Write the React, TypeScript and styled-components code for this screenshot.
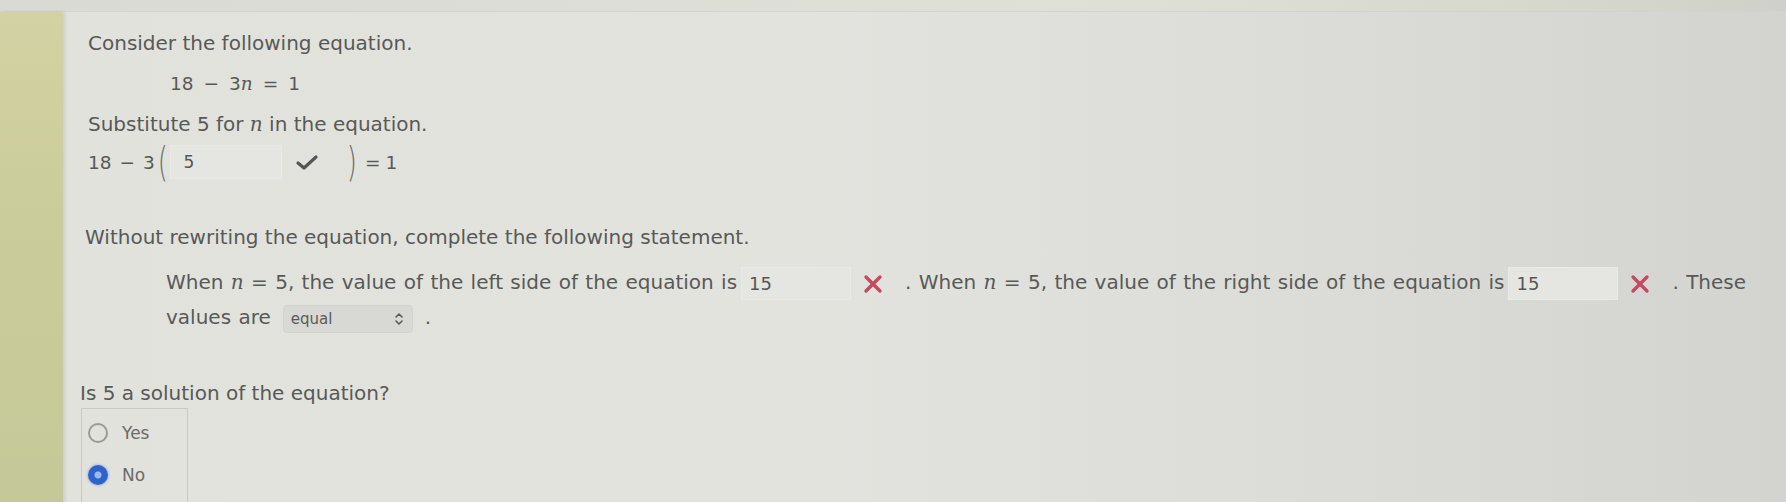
import React from "react";
import styled, { createGlobalStyle } from "styled-components";

const GlobalStyle = createGlobalStyle`
    html, body {
        margin: 0;
        padding: 0;
        background: #dedfd9;
    }
    body {
        font-family: "DejaVu Sans", Verdana, sans-serif;
        color: #585957;
        -webkit-font-smoothing: antialiased;
    }
`;

const Page = styled.div`
    width: 1786px;
    height: 502px;
    overflow: hidden;
    display: flex;
    flex-direction: column;
    background: linear-gradient(90deg, #e1e2dc 0%, #e3e3de 45%, #dbdcd8 75%, #d3d4d0 100%);
`;

const TopBand = styled.div`
    height: 11px;
    flex-shrink: 0;
    background: linear-gradient(90deg, #d9dad4 0%, #dfe0d8 60%, #d8d9cd 85%, #cfd0c9 100%);
    border-bottom: 1px solid #d2d3cc;
`;

const Body = styled.div`
    flex: 1;
    display: flex;
`;

const Strip = styled.div`
    width: 63px;
    flex-shrink: 0;
    background: linear-gradient(180deg, #d2d2a4 0%, #cbcc9b 40%, #c4c898 100%);
    box-shadow: 2px 0 3px rgba(150, 150, 130, 0.25);
`;

const Content = styled.div`
    flex: 1;
    padding: 19px 0 0 24px;
    font-size: 20px;
`;

const Para = styled.div<{ $top: number; $indent?: number }>`
    margin-top: ${(p) => p.$top}px;
    margin-left: ${(p) => p.$indent ?? 0}px;
    line-height: 24px;
    white-space: nowrap;
`;

const MathLine = styled.div<{ $top: number; $indent?: number }>`
    margin-top: ${(p) => p.$top}px;
    margin-left: ${(p) => p.$indent ?? 0}px;
    line-height: 24px;
    font-size: 18.5px;
    white-space: nowrap;
`;

const Op = styled.span<{ $gap?: number }>`
    margin: 0 ${(p) => p.$gap ?? 8}px;
`;

const Var = styled.i`
    font-family: "DejaVu Serif", "Liberation Serif", serif;
    font-style: italic;
`;

const SubRow = styled.div`
    margin-top: 6px;
    height: 40px;
    display: flex;
    align-items: center;
    font-size: 18.5px;
`;

const Paren = styled.span`
    font-size: 40px;
    font-weight: 200;
    line-height: 40px;
    color: #6a6b68;
    transform: scaleX(0.65);
    display: inline-block;
`;

const AnswerBox = styled.span<{ $w: number; $h: number; $size?: number; $pad?: number }>`
    display: inline-flex;
    align-items: center;
    box-sizing: border-box;
    width: ${(p) => p.$w}px;
    height: ${(p) => p.$h}px;
    padding-left: ${(p) => p.$pad ?? 7}px;
    border: 1px solid #e9eae5;
    background: #e5e6e1;
    color: #555654;
    font-size: ${(p) => p.$size ?? 18}px;
    vertical-align: middle;
`;

const Statement = styled.div`
    margin-top: 16px;
    margin-left: 79px;
    line-height: 34px;
    word-spacing: 1px;
    white-space: nowrap;

    ${AnswerBox} {
        margin-left: 4px;
    }
`;

const MarkSlot = styled.span<{ $gap: number }>`
    display: inline-flex;
    align-items: center;
    vertical-align: middle;
    margin: 0 ${(p) => p.$gap}px 0 12px;
`;

const SelectBox = styled.span`
    display: inline-flex;
    align-items: center;
    justify-content: space-between;
    box-sizing: border-box;
    width: 130px;
    height: 28px;
    margin: 0 12px;
    padding: 0 8px 0 7px;
    border-radius: 4px;
    background: #d8d9d4;
    border: 1px solid #d2d3ce;
    font-size: 15px;
    word-spacing: 0;
    color: #5a5b59;
    vertical-align: middle;
`;

const RadioBox = styled.div`
    margin-top: 3px;
    margin-left: -6px;
    width: 107px;
    height: 120px;
    box-sizing: border-box;
    border: 1px solid #c9cac5;
    border-bottom: none;
    padding-top: 14px;
    display: flex;
    flex-direction: column;
    gap: 22px;
`;

const RadioRow = styled.label`
    display: flex;
    align-items: center;
    gap: 14px;
    padding-left: 6px;
    height: 20px;
    font-size: 17px;
    color: #6a6b68;
`;

const RadioDot = styled.span<{ $on?: boolean }>`
    width: 20px;
    height: 20px;
    box-sizing: border-box;
    border-radius: 50%;
    border: ${(p) => (p.$on ? "none" : "2px solid #9a9b97")};
    background: ${(p) =>
        p.$on
            ? "radial-gradient(circle, #9fb8ec 0 3px, #2f63cc 4px 100%)"
            : "transparent"};
    box-shadow: ${(p) => (p.$on ? "0 0 3px rgba(47, 99, 204, 0.6)" : "none")};
`;

const Check = () => (
    <svg width="26" height="20" viewBox="0 0 26 20">
        <path
            d="M4 11 L10 16 L22 5"
            fill="none"
            stroke="#555653"
            strokeWidth="3.2"
            strokeLinecap="round"
            strokeLinejoin="round"
        />
    </svg>
);

const Cross = () => (
    <svg width="20" height="20" viewBox="0 0 20 20">
        <path
            d="M3 3 L17 17 M17 3 L3 17"
            stroke="#c44a62"
            strokeWidth="3.4"
            strokeLinecap="round"
        />
    </svg>
);

const UpDown = () => (
    <svg width="10" height="14" viewBox="0 0 10 14">
        <path
            d="M2 5 L5 2 L8 5 M2 9 L5 12 L8 9"
            fill="none"
            stroke="#5a5b58"
            strokeWidth="1.6"
            strokeLinecap="round"
            strokeLinejoin="round"
        />
    </svg>
);

const App: React.FC = () => {
    return (
        <>
            <GlobalStyle />
            <Page>
                <TopBand />
                <Body>
                    <Strip />
                    <Content>
                        <Para $top={0} $indent={1}>
                            Consider the following equation.
                        </Para>
                        <MathLine $top={17} $indent={83}>
                            18<Op $gap={10}>−</Op>3<Var>n</Var>
                            <Op $gap={10}>=</Op>1
                        </MathLine>
                        <Para $top={16} $indent={1}>
                            Substitute 5 for <Var>n</Var> in the equation.
                        </Para>
                        <SubRow>
                            <span style={{ marginLeft: 1 }}>18</span>
                            <Op>−</Op>
                            <span>3</span>
                            <Paren>(</Paren>
                            <AnswerBox $w={112} $h={34} $size={17} $pad={12}>
                                5
                            </AnswerBox>
                            <MarkSlot $gap={24}>
                                <Check />
                            </MarkSlot>
                            <Paren>)</Paren>
                            <Op $gap={5}>=</Op>
                            <span>1</span>
                        </SubRow>
                        <Para $top={43} $indent={-2}>
                            Without rewriting the equation, complete the
                            following statement.
                        </Para>
                        <Statement>
                            When <Var>n</Var> = 5, the value of the left side of
                            the equation is
                            <AnswerBox $w={110} $h={33}>
                                15
                            </AnswerBox>
                            <MarkSlot $gap={22}>
                                <Cross />
                            </MarkSlot>
                            . When <Var>n</Var> = 5, the value of the right side
                            of the equation is
                            <AnswerBox $w={110} $h={33}>
                                15
                            </AnswerBox>
                            <MarkSlot $gap={22}>
                                <Cross />
                            </MarkSlot>
                            . These
                            <br />
                            values are
                            <SelectBox>
                                <span>equal</span>
                                <UpDown />
                            </SelectBox>
                            .
                        </Statement>
                        <Para $top={47} $indent={-7}>
                            Is 5 a solution of the equation?
                        </Para>
                        <RadioBox>
                            <RadioRow>
                                <RadioDot />
                                Yes
                            </RadioRow>
                            <RadioRow>
                                <RadioDot $on />
                                No
                            </RadioRow>
                        </RadioBox>
                    </Content>
                </Body>
            </Page>
        </>
    );
};

export default App;
